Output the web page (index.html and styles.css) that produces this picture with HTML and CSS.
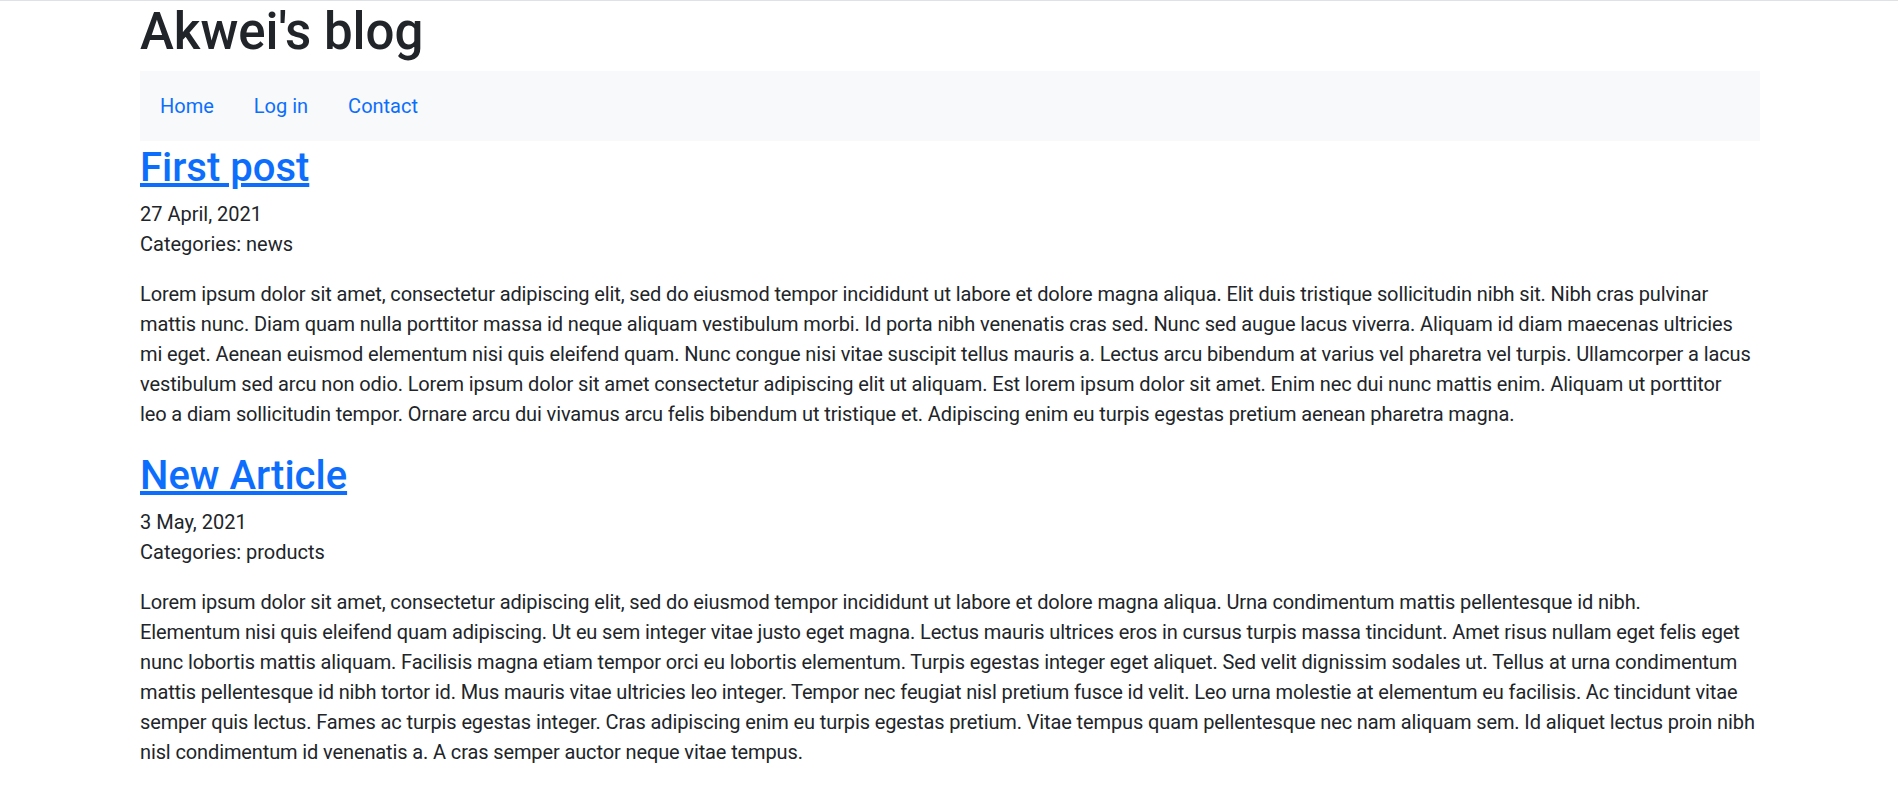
FILE: index.html
```html
<!DOCTYPE html>
<html lang="en">
<head>
<meta charset="utf-8">
<title>Akwei's blog</title>
<link rel="stylesheet" href="styles.css">
</head>
<body>
<div class="container">
  <h1 class="site-title">Akwei's blog</h1>
  <nav class="navbar">
    <a class="nav-link" href="#">Home</a>
    <a class="nav-link" href="#">Log in</a>
    <a class="nav-link" href="#">Contact</a>
  </nav>
  <article class="post">
    <h2 class="post-title"><a href="#">First post</a></h2>
    <div class="post-meta">
      <div>27 April, 2021</div>
      <div>Categories: news</div>
    </div>
    <p>Lorem ipsum dolor sit amet, consectetur adipiscing elit, sed do eiusmod tempor incididunt ut labore et dolore magna aliqua. Elit duis tristique sollicitudin nibh sit. Nibh cras pulvinar<br>
    mattis nunc. Diam quam nulla porttitor massa id neque aliquam vestibulum morbi. Id porta nibh venenatis cras sed. Nunc sed augue lacus viverra. Aliquam id diam maecenas ultricies<br>
    mi eget. Aenean euismod elementum nisi quis eleifend quam. Nunc congue nisi vitae suscipit tellus mauris a. Lectus arcu bibendum at varius vel pharetra vel turpis. Ullamcorper a lacus<br>
    vestibulum sed arcu non odio. Lorem ipsum dolor sit amet consectetur adipiscing elit ut aliquam. Est lorem ipsum dolor sit amet. Enim nec dui nunc mattis enim. Aliquam ut porttitor<br>
    leo a diam sollicitudin tempor. Ornare arcu dui vivamus arcu felis bibendum ut tristique et. Adipiscing enim eu turpis egestas pretium aenean pharetra magna.</p>
  </article>
  <article class="post">
    <h2 class="post-title"><a href="#">New Article</a></h2>
    <div class="post-meta">
      <div>3 May, 2021</div>
      <div>Categories: products</div>
    </div>
    <p>Lorem ipsum dolor sit amet, consectetur adipiscing elit, sed do eiusmod tempor incididunt ut labore et dolore magna aliqua. Urna condimentum mattis pellentesque id nibh.<br>
    Elementum nisi quis eleifend quam adipiscing. Ut eu sem integer vitae justo eget magna. Lectus mauris ultrices eros in cursus turpis massa tincidunt. Amet risus nullam eget felis eget<br>
    nunc lobortis mattis aliquam. Facilisis magna etiam tempor orci eu lobortis elementum. Turpis egestas integer eget aliquet. Sed velit dignissim sodales ut. Tellus at urna condimentum<br>
    mattis pellentesque id nibh tortor id. Mus mauris vitae ultricies leo integer. Tempor nec feugiat nisl pretium fusce id velit. Leo urna molestie at elementum eu facilisis. Ac tincidunt vitae<br>
    semper quis lectus. Fames ac turpis egestas integer. Cras adipiscing enim eu turpis egestas pretium. Vitae tempus quam pellentesque nec nam aliquam sem. Id aliquet lectus proin nibh<br>
    nisl condimentum id venenatis a. A cras semper auctor neque vitae tempus.</p>
  </article>
</div>
</body>
</html>
```
FILE: styles.css
```css
html, body {
  margin: 0;
  padding: 0;
}
body {
  border-top: 1px solid #dee2e6;
  background: #fff;
  color: #212529;
  font-family: Roboto, "Liberation Sans", sans-serif;
  font-size: 20px;
  line-height: 30px;
}
.container {
  width: 1620px;
  margin: 0 138px 0 140px;
}
.site-title {
  margin: 0 0 10px;
  padding-top: 2px;
  font-size: 51px;
  font-weight: 500;
  line-height: 58px;
}
.navbar {
  display: flex;
  padding: 10px 0;
  background: #f8f9fa;
}
.nav-link {
  display: block;
  padding: 10px 20px;
  color: #0d6efd;
  text-decoration: none;
}
.post-title {
  margin: 0 0 10px;
  padding-top: 5px;
  font-size: 40px;
  font-weight: 500;
  line-height: 43px;
}
.post-title a {
  color: #0d6efd;
  text-decoration: underline;
}
.post-meta {
  margin: 0 0 20px;
}
.post p {
  margin: 0 0 20px;
  letter-spacing: -0.12px;
}
```
